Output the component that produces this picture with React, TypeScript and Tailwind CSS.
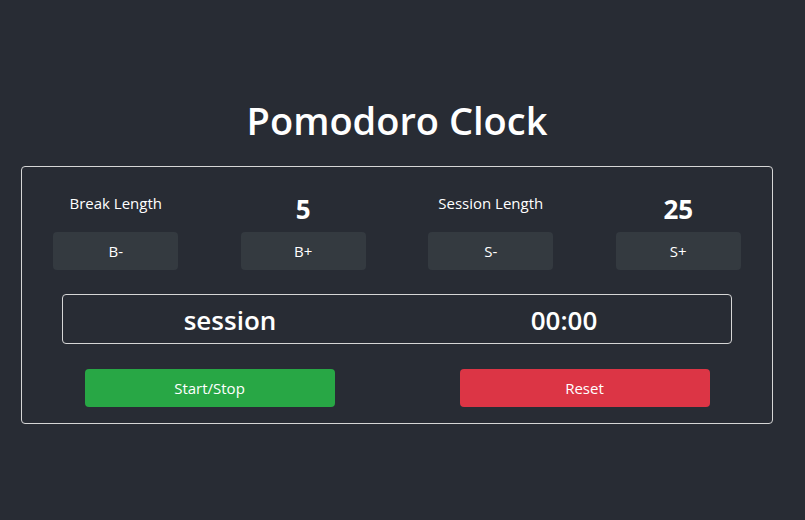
import React from 'react';

const font = { fontFamily: '"Open Sans", "Noto Sans", sans-serif' };

function LengthControl({ label, value, dec, inc }: { label: string; value: number; dec: string; inc: string }) {
  return (
    <>
      <div className="flex flex-col items-center">
        <div className="flex h-[52px] items-center pb-[6px] text-[15px] text-white">{label}</div>
        <button className="h-[38px] w-[125px] rounded bg-[#343a40] text-[15px] text-white">{dec}</button>
      </div>
      <div className="flex flex-col items-center">
        <div className="flex h-[52px] items-center pt-[6px] text-[26px] font-bold text-white">{value}</div>
        <button className="h-[38px] w-[125px] rounded bg-[#343a40] text-[15px] text-white">{inc}</button>
      </div>
    </>
  );
}

export default function App() {
  return (
    <div className="min-h-[520px] bg-[#282c34]" style={font}>
      <div className="ml-[21px] w-[752px] pt-[92px]">
        <h1 className="text-center text-[38px] font-semibold leading-[56px] text-white">Pomodoro Clock</h1>
        <div className="mt-[18px] rounded border border-[#d6d6d6] pb-[16px] pt-[13px]">
          <div className="grid grid-cols-4">
            <LengthControl label="Break Length" value={5} dec="B-" inc="B+" />
            <LengthControl label="Session Length" value={25} dec="S-" inc="S+" />
          </div>
          <div className="mx-[40px] mt-[24px] grid h-[50px] grid-cols-2 items-center rounded border border-[#d6d6d6] pt-[3px] text-[26px] font-semibold text-white">
            <div className="text-center">session</div>
            <div className="text-center">00:00</div>
          </div>
          <div className="mt-[25px] grid grid-cols-2">
            <div className="flex justify-center">
              <button className="h-[38px] w-[250px] rounded bg-[#28a745] text-[15px] text-white">Start/Stop</button>
            </div>
            <div className="flex justify-center">
              <button className="h-[38px] w-[250px] rounded bg-[#dc3545] text-[15px] text-white">Reset</button>
            </div>
          </div>
        </div>
      </div>
    </div>
  );
}
